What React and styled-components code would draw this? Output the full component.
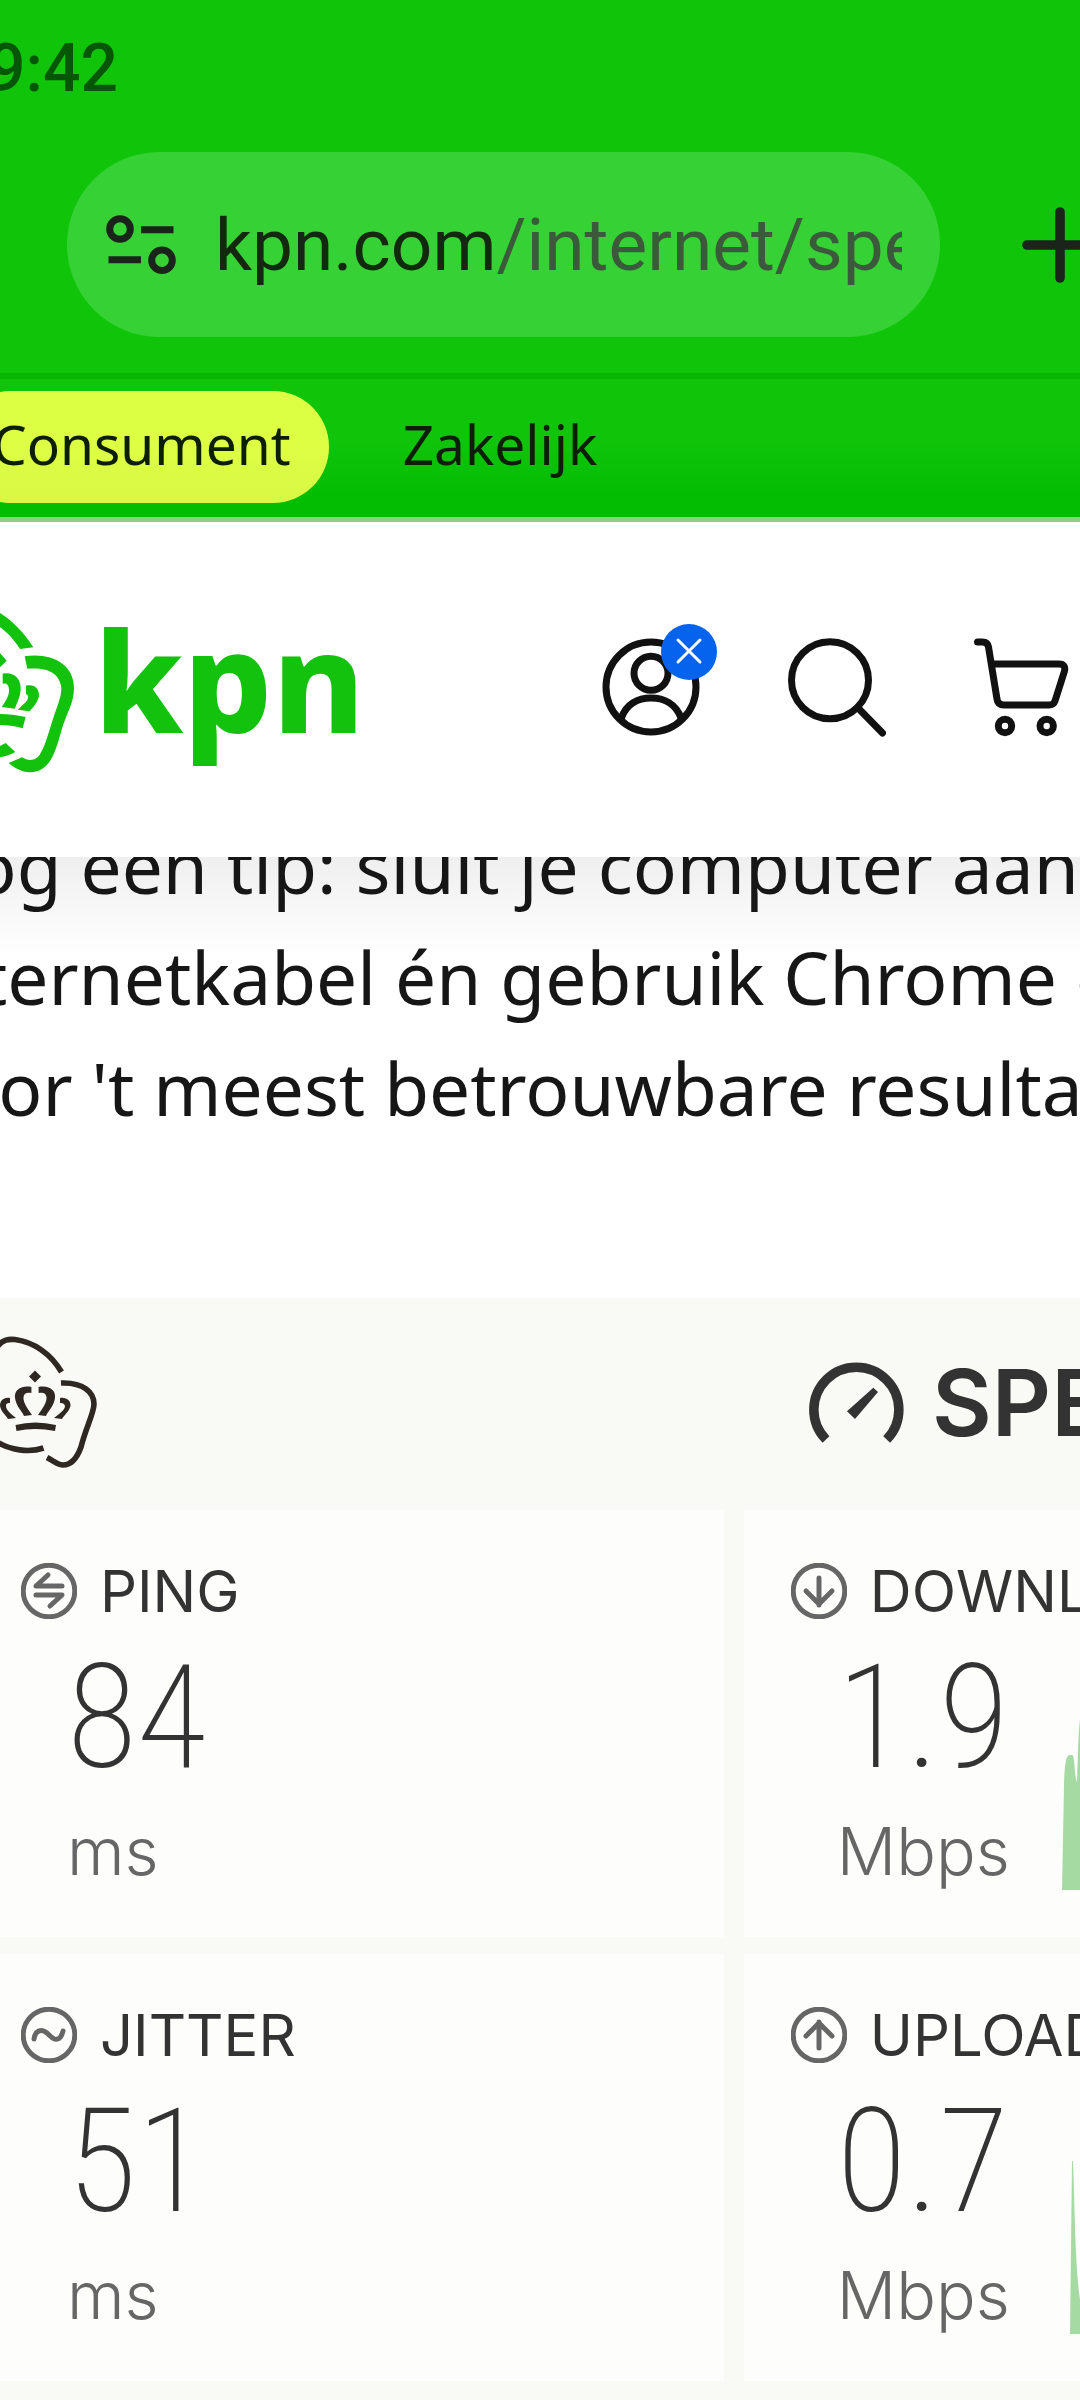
import React from 'react';
import styled, { createGlobalStyle, css } from 'styled-components';

export default function App() {
  return (
    <Page>
      <GlobalStyle />
      <StatusBar>
        <time>9:42</time>
      </StatusBar>
      <Toolbar>
        <AddressBar type='button' aria-label='Adres'>
          <TuneIcon />
          <Url>
            kpn.com<UrlPath>/internet/speedtest</UrlPath>
          </Url>
        </AddressBar>
        <NewTab type='button' aria-label='Nieuw tabblad'>
          <PlusIcon />
        </NewTab>
      </Toolbar>

      <Segments>
        <Segment href='#consument' $active>
          Consument
        </Segment>
        <Segment href='#zakelijk'>Zakelijk</Segment>
      </Segments>

      <Header>
        <Brand href='#home'>
          <BrandMark />
          <Wordmark>kpn</Wordmark>
        </Brand>
        <Actions>
          <IconButton type='button' aria-label='Account'>
            <AccountIcon />
          </IconButton>
          <IconButton type='button' aria-label='Zoeken'>
            <SearchIcon />
          </IconButton>
          <IconButton type='button' aria-label='Winkelwagen'>
            <CartIcon />
          </IconButton>
        </Actions>
      </Header>

      <Intro>
        <Tip>
          Nog een tip: sluit je computer aan
          <br />
          internetkabel én gebruik Chrome of
          <br />
          voor 't meest betrouwbare resultaat
        </Tip>
      </Intro>

      <Speedtest>
        <TestHeader>
          <CrownIcon />
          <TestTitle>
            <GaugeIcon />
            SPEEDTEST
          </TestTitle>
        </TestHeader>
        <Results>
          {results.map(({ label, value, unit, icon, chart }) => (
            <Card key={label}>
              <CardTitle>
                <RoundIcon>{icon}</RoundIcon>
                {label}
              </CardTitle>
              <Reading>
                <Figures>
                  <Value>{value}</Value>
                  <Unit>{unit}</Unit>
                </Figures>
                {chart && (
                  <Chart viewBox='0 0 60 180' aria-hidden='true'>
                    <path d={chart} />
                  </Chart>
                )}
              </Reading>
            </Card>
          ))}
        </Results>
      </Speedtest>
    </Page>
  );
}

const results = [
  {
    label: 'PING',
    value: '84',
    unit: 'ms',
    icon: <path d='M41 23H15L27 12M15 32H41L29 43' />,
  },
  {
    label: 'DOWNLOAD',
    value: '1.9',
    unit: 'Mbps',
    icon: <path d='M28 15V42M15 28L28 41L41 28' />,
    chart: 'M0 180L2 75C3 42 6 45 10 45C13 45 12 65 15 72C16 50 16 10 20 0H60V180Z',
  },
  {
    label: 'JITTER',
    value: '51',
    unit: 'ms',
    icon: <path d='M13 32C14 24 20 21 26 26C32 32 34 33 37 32C40 31 41 28 42 24' />,
  },
  {
    label: 'UPLOAD',
    value: '0.7',
    unit: 'Mbps',
    icon: <path d='M28 41V15M15 29L28 16L41 29' />,
    chart: 'M8 180L10 7H11C13 60 13 110 18 146C24 160 40 150 60 150V180Z',
  },
];

function RoundIcon({ children }) {
  return (
    <RoundSvg viewBox='0 0 56 56' aria-hidden='true'>
      <circle cx='28' cy='28' r='25.8' />
      {children}
    </RoundSvg>
  );
}

function TuneIcon() {
  return (
    <TuneSvg viewBox='0 0 70 60' aria-hidden='true'>
      <circle cx='14' cy='14' r='10.3' />
      <circle cx='56' cy='45.3' r='10.3' />
      <path d='M35 14.7H67.5M2.5 44.7H35' />
    </TuneSvg>
  );
}

function PlusIcon() {
  return (
    <svg width='76' height='76' viewBox='0 0 76 76' aria-hidden='true'>
      <path d='M5 38H71M38 5V71' stroke='#1b241b' strokeWidth='9.6' strokeLinecap='round' />
    </svg>
  );
}

function BrandMark() {
  return (
    <BrandSvg viewBox='0 100 225 480' aria-hidden='true'>
      <path d='M0 100C40 125 72 160 100 203L60 208C45 185 25 160 0 143Z' />
      <path d='M74 230C150 218 222 250 222 325C222 370 200 400 185 450C165 520 150 578 88 578C65 577 42 564 26 550L66 533C85 545 110 545 122 520C140 490 150 440 165 400C175 370 184 350 184 325C180 285 150 262 82 267Z' />
      <path d='M0 220L20 243L0 263Z' />
      <path d='M8 282C40 275 64 295 62 330C60 355 50 370 45 387L5 382C20 360 28 345 27 330C26 315 20 310 8 312Z' />
      <path d='M78 318C105 312 118 328 117 350C112 370 98 385 88 395L53 390C68 375 88 362 84 348L78 342Z' />
      <path d='M0 403C25 403 50 407 77 412L68 446C45 438 20 437 0 436Z' />
      <path d='M0 499L17 490L46 517C30 526 15 530 0 533Z' />
    </BrandSvg>
  );
}

function AccountIcon() {
  return (
    <LineSvg viewBox='0 0 98 98' aria-hidden='true'>
      <circle cx='49' cy='49' r='45' />
      <circle cx='49' cy='35.3' r='17' />
      <path d='M19.5 80C24 66 36 60 49 60S74 66 79 80' />
      <Badge cx='87' cy='14' r='28' />
      <BadgeCross d='M76 2L98 24M98 2L76 24' />
    </LineSvg>
  );
}

function SearchIcon() {
  return (
    <LineSvg viewBox='0 0 98 98' aria-hidden='true'>
      <circle cx='42' cy='42.3' r='38.5' />
      <path d='M70.3 70.3L94.5 95' />
    </LineSvg>
  );
}

function CartIcon() {
  return (
    <LineSvg viewBox='0 0 98 98' aria-hidden='true'>
      <path d='M3.5 4H8.5C12 4 14 6 14.5 9L23 61C23.5 65 26 67 30 67H75C78 67 80 66 81 63L90.5 33C91.5 29 90 26 85 26H19' />
      <circle cx='31' cy='88' r='6.7' />
      <circle cx='72.7' cy='88' r='6.7' />
    </LineSvg>
  );
}

function CrownIcon() {
  return (
    <CrownSvg viewBox='0 0 98 139' aria-hidden='true'>
      <g fill='none' stroke='#2f2722' strokeWidth='5.6'>
        <path d='M-3 14C3 6 9 6 15 6.5C34 9 51 21 61.5 39' />
        <path d='M61 50C84 49 94 60 94 71C94 80 86 94 81 114C76 128 70 132 63 132C58 132 54 128 47 124.5' />
        <path d='M-3 109C10 117 29 120 43.5 115' />
      </g>
      <g fill='#2f2722'>
        <path d='M35 37.5L41 43.5L35 49.5L29 43.5Z' />
        <path d='M38.6 54C50 52 56 58 55 65C54 73 48 78 46 83L38 82C42 76 47 70 46.5 64C46 60 43 59 38.6 60Z' />
        <path d='M31.4 54C20 52 14 58 15 65C16 73 22 78 24 83L32 82C28 76 23 70 23.5 64C24 60 27 59 31.4 60Z' />
        <path d='M60 65C67 64 71 68 70.5 73C69 79 64 82 62 86L54 85C59 81 65 77 65 73C64 70 62 70 60 70Z' />
        <path d='M10 65C3 64 0 68 0 73C1 79 6 82 8 86L16 85C11 81 6 77 6 73C6 70 8 70 10 70Z' />
        <path d='M15.5 92Q35 87 56 92L55 98Q35 94 16.5 98Z' />
      </g>
    </CrownSvg>
  );
}

function GaugeIcon() {
  return (
    <GaugeSvg viewBox='0 0 95 82' aria-hidden='true'>
      <path d='M17 77.5A42.5 42.5 0 1 1 77.7 77.5' fill='none' stroke='#333' strokeWidth='9.5' />
      <path d='M38 49.3L46 57L69 30L64.3 25.7Z' fill='#333' />
    </GaugeSvg>
  );
}

const GlobalStyle = createGlobalStyle`
  body {
    margin: 0;
    overflow-x: hidden;
    background: #f9faf6;
    color: #161616;
    font-family: 'Noto Sans', 'Open Sans', sans-serif;
  }

  * {
    box-sizing: border-box;
  }
`;

const resetButton = css`
  border: 0;
  padding: 0;
  margin: 0;
  background: none;
  font: inherit;
  color: inherit;
  text-align: left;
  cursor: pointer;
`;

const Page = styled.main`
  overflow: hidden;
`;

const StatusBar = styled.div`
  height: 137px;
  padding-top: 30px;
  margin-left: -12px;
  background: #10c40a;
  color: #055605;
  font-family: Roboto, sans-serif;
  font-size: 66px;
  font-weight: 500;
  line-height: 78px;
`;

const Toolbar = styled.div`
  display: flex;
  align-items: center;
  gap: 82px;
  padding: 15px 0 36px 67px;
  background: #10c40a;
  border-bottom: 6px solid #08b404;
`;

const AddressBar = styled.button`
  ${resetButton}
  flex: 1;
  min-width: 0;
  height: 185px;
  display: flex;
  align-items: center;
  gap: 39px;
  padding: 0 38px 0 39px;
  border-radius: 93px;
  background: #36d235;
  color: #12280f;
`;

const TuneSvg = styled.svg`
  flex: none;
  width: 70px;
  height: 60px;
  fill: none;
  stroke: #1b241b;
  stroke-width: 7;
`;

const Url = styled.span`
  flex: 1;
  overflow: hidden;
  white-space: nowrap;
  font-family: Roboto, sans-serif;
  font-size: 73px;
  line-height: 90px;
`;

const UrlPath = styled.span`
  color: #3b5a3b;
`;

const NewTab = styled.button`
  ${resetButton}
  width: 58px;
  height: 76px;
  overflow: visible;
`;

const Segments = styled.nav`
  display: flex;
  gap: 36px;
  padding: 12px 0 14px;
  margin-left: -46px;
  background: linear-gradient(#10c40a 45%, #02bd02 85%);
  border-bottom: 5px solid #8fcb8f;
`;

const Segment = styled.a`
  padding: 13px 38px 19px;
  border-radius: 56px;
  background: ${({ $active }) => ($active ? 'linear-gradient(#ddff43 40%, #d8f844)' : 'none')};
  color: #0c1f05;
  font-size: 55px;
  line-height: 80px;
  text-decoration: none;
`;

const Header = styled.header`
  display: flex;
  align-items: center;
  justify-content: space-between;
  height: 335px;
  padding: 0 8px 6px 0;
  background: #fff;
`;

const Brand = styled.a`
  display: flex;
  align-items: center;
  gap: 19px;
  padding-top: 12px;
  color: #12c20d;
  text-decoration: none;
`;

const BrandSvg = styled.svg`
  width: 75px;
  height: 160px;
  fill: currentColor;
`;

const Wordmark = styled.span`
  padding-bottom: 28px;
  font-size: 140px;
  font-weight: 800;
  line-height: 132px;
`;

const Actions = styled.div`
  display: flex;
  gap: 88px;
`;

const IconButton = styled.button`
  ${resetButton}
  width: 98px;
  height: 98px;
`;

const LineSvg = styled.svg`
  display: block;
  width: 98px;
  height: 98px;
  overflow: visible;
  fill: none;
  stroke: #111;
  stroke-width: 7;
  stroke-linecap: round;
`;

const Badge = styled.circle`
  fill: #0563ee;
  stroke: none;
`;

const BadgeCross = styled.path`
  stroke: #fff;
  stroke-width: 3;
`;

const Intro = styled.section`
  height: 441px;
  overflow: hidden;
  background: linear-gradient(#efefef, #f7f7f7 50px, #fff 100px);
`;

const Tip = styled.p`
  margin: -47px 0 0 -83px;
  font-size: 73px;
  line-height: 111px;
  white-space: nowrap;
`;

const Speedtest = styled.section`
  color: #333;
  font-family: Inter, sans-serif;
`;

const TestHeader = styled.div`
  display: flex;
  align-items: center;
  justify-content: space-between;
  height: 212px;
  padding-bottom: 3px;
`;

const CrownSvg = styled.svg`
  width: 98px;
  height: 139px;
`;

const TestTitle = styled.h2`
  display: flex;
  align-items: center;
  gap: 28px;
  width: 271px;
  margin: 0;
  font-size: 92px;
  font-weight: 600;
  white-space: nowrap;
`;

const GaugeSvg = styled.svg`
  flex: none;
  width: 95px;
  height: 82px;
`;

const Results = styled.div`
  display: grid;
  grid-template-columns: minmax(0, 29fr) minmax(0, 13fr);
  gap: 17px 20px;
  margin-left: -26px;
`;

const Card = styled.article`
  height: 427px;
  padding: 41px 0 47px 47px;
  overflow: hidden;
  background: #fdfefc;
`;

const CardTitle = styled.h3`
  display: flex;
  align-items: center;
  gap: 23px;
  height: 80px;
  margin: 0;
  font-size: 58px;
  font-weight: 400;
  white-space: nowrap;
`;

const RoundSvg = styled.svg`
  flex: none;
  width: 56px;
  height: 56px;
  fill: none;
  stroke: #666;
  stroke-width: 5;
  stroke-linecap: round;
  stroke-linejoin: round;
`;

const Reading = styled.div`
  display: flex;
  align-items: flex-end;
  height: 259px;
  padding-left: 46px;
`;

const Figures = styled.div`
  flex: none;
  width: 225px;
  height: 259px;
`;

const Value = styled.div`
  height: 170px;
  font-family: 'Roboto Condensed', 'Liberation Sans Narrow', Roboto, sans-serif;
  font-size: 144px;
  font-weight: 200;
  line-height: 174px;
`;

const Unit = styled.div`
  color: #666;
  font-size: 66px;
  font-weight: 300;
  line-height: 100px;
`;

const Chart = styled.svg`
  flex: none;
  width: 60px;
  height: 180px;
  fill: #a5dba3;
`;
